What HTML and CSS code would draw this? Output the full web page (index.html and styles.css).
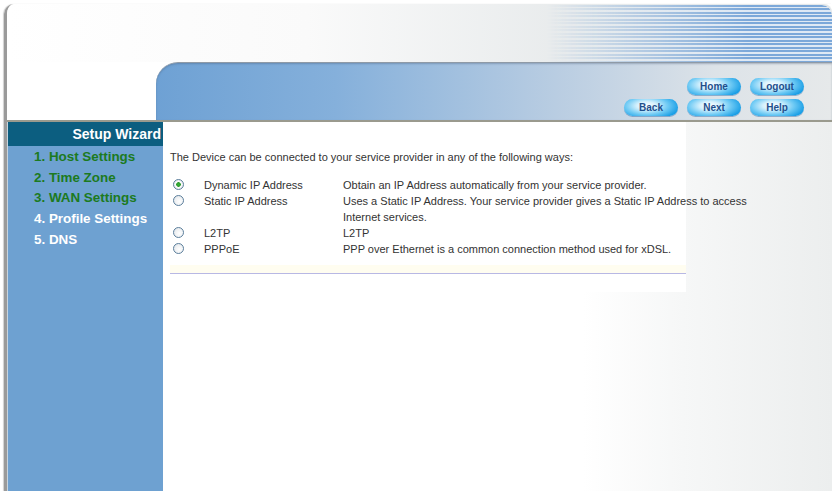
FILE: index.html
```html
<!DOCTYPE html>
<html lang="en">
<head>
<meta charset="utf-8">
<title>Setup Wizard</title>
<link rel="stylesheet" href="styles.css">
</head>
<body>
<div class="shell">
  <header class="masthead">
    <div class="top-band"><div class="stripes"></div></div>
    <div class="nav-band">
      <div class="logo-space"></div>
      <div class="tab">
        <div class="btn-grid">
          <span></span>
          <a class="pill" href="#">Home</a>
          <a class="pill" href="#">Logout</a>
          <a class="pill" href="#">Back</a>
          <a class="pill" href="#">Next</a>
          <a class="pill" href="#">Help</a>
        </div>
      </div>
    </div>
  </header>
  <div class="main">
    <nav class="sidebar">
      <div class="side-title">Setup Wizard</div>
      <ul class="steps">
        <li class="done">1. Host Settings</li>
        <li class="done">2. Time Zone</li>
        <li class="done">3. WAN Settings</li>
        <li>4. Profile Settings</li>
        <li>5. DNS</li>
      </ul>
    </nav>
    <section class="content">
      <div class="panel">
        <p class="intro">The Device can be connected to your service provider in any of the following ways:</p>
        <table class="modes">
          <tr>
            <td class="pick"><input type="radio" name="wan" checked></td>
            <td class="name">Dynamic IP Address</td>
            <td>Obtain an IP Address automatically from your service provider.</td>
          </tr>
          <tr>
            <td class="pick"><input type="radio" name="wan"></td>
            <td class="name">Static IP Address</td>
            <td>Uses a Static IP Address. Your service provider gives a Static IP Address to access Internet services.</td>
          </tr>
          <tr>
            <td class="pick"><input type="radio" name="wan"></td>
            <td class="name">L2TP</td>
            <td>L2TP</td>
          </tr>
          <tr>
            <td class="pick"><input type="radio" name="wan"></td>
            <td class="name">PPPoE</td>
            <td>PPP over Ethernet is a common connection method used for xDSL.</td>
          </tr>
        </table>
        <div class="rule"></div>
      </div>
    </section>
  </div>
</div>
</body>
</html>
```

FILE: styles.css
```css
html, body {
  margin: 0;
  padding: 0;
  background: #fff;
  height: 100%;
  overflow: hidden;
}

body {
  font-family: "Liberation Sans", Arial, sans-serif;
}

.shell {
  margin: 4px 0 0 4px;
  border-left: 3px solid #9a9a9a;
  border-top-left-radius: 10px;
  box-shadow: -1px 0 1px #d0d0d0;
  height: 487px;
  display: flex;
  flex-direction: column;
  overflow: hidden;
}

/* ---------- masthead ---------- */
.masthead {
  flex: none;
}

.top-band {
  position: relative;
  height: 58px;
  background: linear-gradient(to right, #ffffff 0, #fafafa 300px, #e8ebec 560px, #e4e8ea 100%);
  border-top-right-radius: 8px;
}

.stripes {
  position: absolute;
  inset: 1px 0 0 0;
  background: repeating-linear-gradient(to bottom, #7ca8d9 0, #7ca8d9 2px, #dfe9f4 2px, #dfe9f4 3.5px);
  -webkit-mask-image: linear-gradient(to right, transparent 540px, rgba(0,0,0,.5) 640px, #000 740px);
  mask-image: linear-gradient(to right, transparent 540px, rgba(0,0,0,.5) 640px, #000 740px);
  border-top-right-radius: 10px;
}

.nav-band {
  display: flex;
  height: 60px;
  border-bottom: 2px solid #9a9a8e;
  box-sizing: border-box;
  background: #fff;
}

.logo-space {
  width: 149px;
  flex: none;
}

.tab {
  flex: 1;
  border-top: 1px solid #8f9aa6;
  border-top-left-radius: 22px;
  background: linear-gradient(to right, #6ea1d4 0, #85b0db 180px, #b9cde2 400px, #dde3e8 560px, #e6e9ea 100%);
  box-shadow: inset 0 1px 2px rgba(60,80,110,.35);
  display: flex;
  justify-content: flex-end;
  align-items: flex-start;
  padding: 15px 28px 0 0;
}

.btn-grid {
  display: grid;
  grid-template-columns: repeat(3, 54px);
  grid-auto-rows: 17px;
  column-gap: 9px;
  row-gap: 4px;
}

.pill {
  display: flex;
  align-items: center;
  justify-content: center;
  border-radius: 9px;
  background: radial-gradient(ellipse 60% 80% at 42% 40%, #ffffff 0, #d6f1fd 30%, #6fcaf4 65%, #1b9fe6 100%);
  color: #1f4f8c;
  font: bold 10px "Liberation Sans", Arial, sans-serif;
  text-decoration: none;
  box-shadow: 0 1px 0 rgba(20,90,160,.4);
}

/* ---------- main area ---------- */
.main {
  flex: 1;
  display: flex;
  min-height: 0;
}

.sidebar {
  width: 155px;
  flex: none;
  background: #6ea1d1;
  border-left: 1px solid #c8d4de;
}

.side-title {
  background: #0c5e80;
  color: #fff;
  font: bold 14px "Liberation Sans", Arial, sans-serif;
  text-align: right;
  padding: 4px 2px 0 0;
  height: 20px;
  line-height: 17px;
}

.steps {
  list-style: none;
  margin: 0;
  padding: 1px 0 0 26px;
}

.steps li {
  font: bold 13.4px "Liberation Sans", Arial, sans-serif;
  color: #fff;
  height: 20.7px;
  line-height: 20.7px;
}

.steps li.done {
  color: #1c7a20;
}

.content {
  flex: 1;
  background: linear-gradient(to right, #ffffff 0, #ffffff 420px, #f6f7f7 520px, #eceeee 100%);
}

.panel {
  width: 516px;
  margin-left: 7px;
  background: #fff;
  padding-top: 27px;
  padding-bottom: 18px;
}

.intro {
  margin: 0 0 12px;
  font-size: 11px;
  line-height: 16px;
  color: #333;
}

.modes {
  border-collapse: collapse;
  font-size: 11px;
  color: #333;
  width: 610px;
}

.modes td {
  padding: 0;
  height: 16px;
  line-height: 16px;
  vertical-align: top;
}

.modes td.pick {
  width: 34px;
}

.modes td.name {
  width: 139px;
}

/* XP-style round option buttons */
.modes input {
  -webkit-appearance: none;
  appearance: none;
  display: block;
  box-sizing: border-box;
  margin: 2px 0 0 3px;
  width: 11px;
  height: 11px;
  border: 1px solid #5c7f9c;
  border-radius: 50%;
  background: radial-gradient(circle at 60% 60%, #ffffff 0, #f0f2f4 50%, #d6dde3 100%);
}

.modes input:checked {
  background: radial-gradient(circle, #35b135 0, #2f9a2f 2px, #ffffff 2.6px, #f0f2f4 60%, #d6dde3 100%);
}

.rule {
  height: 8px;
  margin-top: 8px;
  background: #fffdf0;
  border-bottom: 1px solid #b8b8e4;
}
```
